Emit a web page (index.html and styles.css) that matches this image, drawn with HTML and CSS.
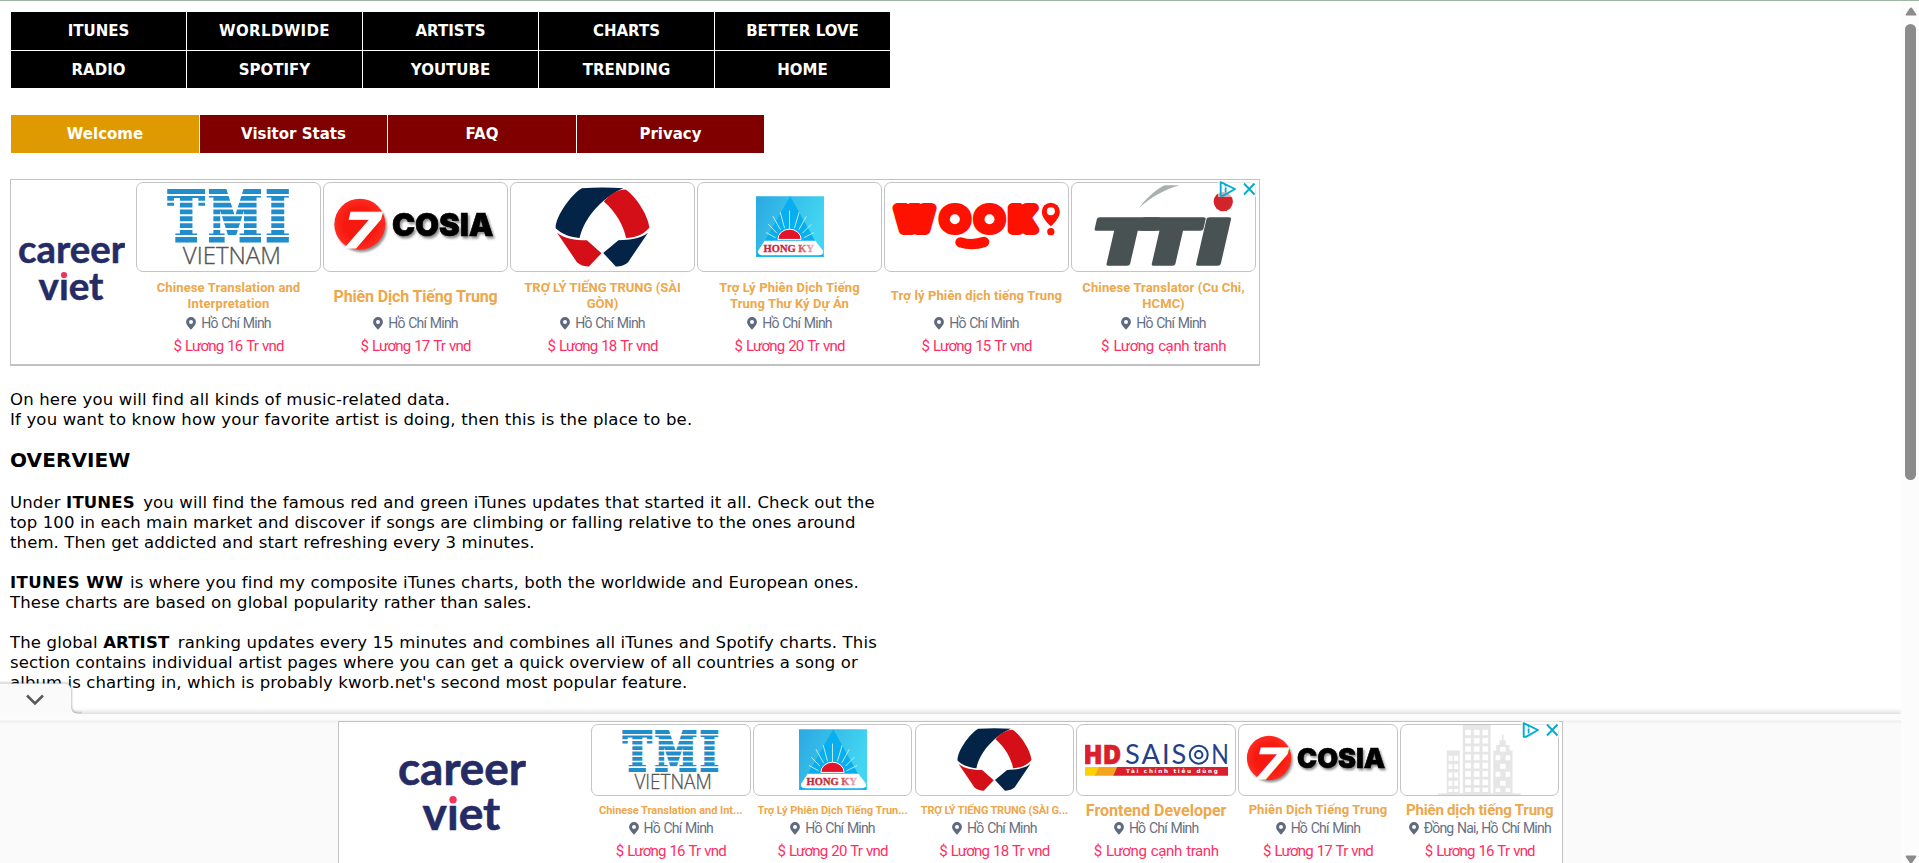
FILE: index.html
```html
<!DOCTYPE html>
<html lang="en">
<head>
<meta charset="utf-8">
<title>Kworb.net</title>
<link rel="stylesheet" href="styles.css">
</head>
<body>
<svg class="defs" aria-hidden="true">
  <defs>
    <linearGradient id="sky" x1="0" x2="1" y1="0" y2="0.4"><stop offset="0" stop-color="#2ba9e2"/><stop offset="1" stop-color="#43d6f2"/></linearGradient>
    <linearGradient id="fade" x1="0" x2="1"><stop offset="0.6" stop-color="#c8283a"/><stop offset="1" stop-color="#efb9c0"/></linearGradient>
    <radialGradient id="ball"><stop offset="0.6" stop-color="#f5190f"/><stop offset="1" stop-color="#ff2a20"/></radialGradient>
    <symbol id="tmi" viewBox="502 60 368 228">
      <g font-family="DejaVu Serif" font-weight="700" font-size="200" fill="#218ecb" stroke="#218ecb" stroke-width="15">
        <text x="506" y="212" textLength="106" lengthAdjust="spacingAndGlyphs">T</text>
        <text x="627" y="212" textLength="158" lengthAdjust="spacingAndGlyphs">M</text>
        <text x="799" y="212" textLength="69" lengthAdjust="spacingAndGlyphs">I</text>
      </g>
      <path d="M500 78h372M500 98.500h372M500 118.500h372M500 139h372M500 159.500h372M500 180h372M500 201h372" stroke="#fff" stroke-width="6"/>
      <text x="549" y="285" font-family="Open Sans" font-weight="300" font-size="74" fill="#555" stroke="#555" textLength="294" lengthAdjust="spacingAndGlyphs">VIETNAM</text>
    </symbol>
    <symbol id="cosia" viewBox="998 84 496 172">
      <g class="drop">
        <circle cx="1078" cy="163" r="77" fill="url(#ball)"/>
        <text x="1175" y="198" font-family="Inter" font-weight="900" font-size="96" textLength="306" lengthAdjust="spacingAndGlyphs" stroke="#000" stroke-width="2">COSIA</text>
      </g>
      <text transform="translate(1019 236) skewX(-14)" font-family="Inter" font-weight="800" font-size="148" fill="#fff" stroke="#fff" stroke-width="3" textLength="106" lengthAdjust="spacingAndGlyphs">7</text>
    </symbol>
    <symbol id="hexa" viewBox="166 50 286 240">
      <path fill="#032347" d="M247 53Q310 49 372 53C318 75 255 135 240 203C215 202 186 192 168 174C166 140 215 70 247 53Z"/>
      <path fill="#d50f18" d="M313 93C330 72 352 58 378 57C408 75 447 135 450 172C430 194 408 202 380 203C372 165 350 125 313 93Z"/>
      <path fill="#d50f18" d="M172 187C195 205 225 209 262 210L306 249L268 289C255 289 240 284 232 276Z"/>
      <path fill="#032347" d="M446 187C424 204 395 208 357 210L311 248L349 289C363 289 378 284 386 276Z"/>
    </symbol>
    <symbol id="hongky" viewBox="769 82 205 182">
      <path fill="url(#sky)" d="M769 82h205v182H769z"/>
      <path fill="#08aef0" d="M872 82L974 264H769Z"/>
      <path d="M870 205V125M855 178L842 130M843 183L820 142M832 193L806 166M828 207L799 191M885 178L899 130M898 183L921 142M909 193L936 166M913 207L944 191" stroke="#b9ecdc" stroke-width="3"/>
      <path fill="#e3142a" stroke="#fff" stroke-width="3" d="M835 212a35 31 0 0 1 70 0z"/>
      <path fill="#fff" d="M795 216H948L971 246Q973 260 958 260H788Q774 260 775 247Z"/>
      <text x="792" y="251" font-family="Liberation Serif" font-weight="700" font-size="32" fill="url(#fade)" stroke="url(#fade)" textLength="152" lengthAdjust="spacingAndGlyphs">HONG KY</text>
    </symbol>
    <symbol id="wook" viewBox="70 94 506 150">
      <g font-family="Inter" font-weight="900" font-size="88" fill="#fe1100" stroke="#fe1100" stroke-width="30" stroke-linejoin="round">
        <text x="85" y="178" textLength="104" lengthAdjust="spacingAndGlyphs">W</text>
        <text x="222" y="177" textLength="74" lengthAdjust="spacingAndGlyphs">O</text>
        <text x="325" y="177" textLength="74" lengthAdjust="spacingAndGlyphs">O</text>
        <text x="428" y="178" textLength="70" lengthAdjust="spacingAndGlyphs">K</text>
      </g>
      <circle cx="258" cy="146" r="15" fill="#fff"/><circle cx="362" cy="146" r="15" fill="#fff"/>
      <path d="M275 215Q310 226 346 214" fill="none" stroke="#fe1100" stroke-width="31" stroke-linecap="round"/>
      <path fill="#fe1100" d="M546 167C532 153 519 139 519 123a27 27 0 0 1 54 0C573 139 560 153 546 167Z"/>
      <circle cx="546" cy="122" r="12" fill="#fff"/><circle cx="546" cy="183" r="11" fill="#fe1100"/>
    </symbol>
    <symbol id="tti" viewBox="660 38 440 250">
      <g font-family="Inter" font-weight="900" font-size="186" fill="#495253" stroke="#495253" stroke-width="11" stroke-linejoin="round">
        <text transform="translate(680 277) skewX(-13)" x="-31" textLength="190" lengthAdjust="spacingAndGlyphs">T</text>
        <text transform="translate(816 277) skewX(-13)" x="-31" textLength="190" lengthAdjust="spacingAndGlyphs">T</text>
        <text transform="translate(973 277) skewX(-13)" textLength="84" lengthAdjust="spacingAndGlyphs">I</text>
      </g>
      <path fill="#a9b0b0" d="M805 109C830 75 860 50 884 39H928C885 51 840 75 805 109Z"/>
      <circle cx="1060" cy="88" r="29" fill="#d3232b"/>
    </symbol>
    <symbol id="saison" viewBox="1005 130 430 96">
      <text x="1000" y="191" font-family="Open Sans" font-weight="800" font-size="80" fill="#dc1f2c" stroke="#dc1f2c" stroke-width="2" textLength="114" lengthAdjust="spacingAndGlyphs">HD</text>
      <g font-family="Lato" font-size="82" fill="#1f4287">
        <text x="1125" y="191" textLength="185" lengthAdjust="spacing">SAIS</text>
        <text x="1385" y="191" textLength="53" lengthAdjust="spacingAndGlyphs">N</text>
      </g>
      <circle cx="1347" cy="162" r="27" fill="none" stroke="#1f4287" stroke-width="6"/><circle cx="1347" cy="162" r="11" fill="none" stroke="#1f4287" stroke-width="6"/>
      <path fill="#fbd107" d="M1005 199h45l-12 26h-33z"/><path fill="#f4a51d" d="M1047 199h57l-12 26h-57z"/><path fill="#dc1f2c" d="M1102 199h333v26H1090z"/>
      <text x="1128" y="218" font-family="DejaVu Sans" font-weight="700" font-size="17" fill="#fff" textLength="276" lengthAdjust="spacing">Tài chính tiêu dùng</text>
    </symbol>
    <symbol id="city" viewBox="777 73 249 211">
      <path fill="#e6e6e6" d="M777 279h26V150h39v129h9V73h84v206h8V150h9V133h10V119h7V102h5V119h7V133h11V150h9V279h25v5H777z"/>
      <g stroke="#fff" stroke-width="17" fill="none">
        <path d="M867 87V275M893 87V275M919 87V275" stroke-dasharray="17 8"/>
        <path d="M814 166V275M831 166V275" stroke-width="12" stroke-dasharray="15 10"/>
        <path d="M972 139V275" stroke-dasharray="15 36"/><path d="M957 164V275M987 164V275" stroke-width="14" stroke-dasharray="15 35"/>
      </g>
    </symbol>
    <symbol id="pin" viewBox="0 0 10 13"><path fill="#5f6a80" fill-rule="evenodd" d="M5 0a4.900 4.900 0 0 1 4.900 4.900C9.900 8 6.500 10.500 5 12.800C3.500 10.500 .1 8 .1 4.900A4.900 4.900 0 0 1 5 0zM5 3a2 2 0 1 0 0 4a2 2 0 0 0 0-4z"/></symbol>
    <symbol id="career" viewBox="0 0 107 59">
      <g font-family="Lato" font-weight="700" font-size="38" fill="#252b64" stroke="#252b64" stroke-width=".5">
        <text x="0" y="20.500" textLength="107" lengthAdjust="spacingAndGlyphs">career</text>
        <text x="20.500" y="58" textLength="65" lengthAdjust="spacingAndGlyphs">viet</text>
      </g>
      <path d="M42 29h8v7.500h-8z" fill="#fff"/><circle cx="46" cy="33" r="3.100" fill="#f0325c"/>
    </symbol>
    <symbol id="choices" viewBox="0 0 38 19">
      <path d="M0 0h38v17H0z" fill="#fff" fill-opacity=".6"/>
      <path d="M2.700 2.200V15.800H5L17 9Z" fill="none" stroke="#00aecd" stroke-width="1.900" stroke-linejoin="round"/>
      <path d="M7.600 7.500v5M7.600 4.800v1.600" stroke="#00aecd" stroke-width="1.800"/>
      <path d="M26 3.500l10.500 11M36.500 3.500l-10.500 11" stroke="#00aecd" stroke-width="1.900"/>
    </symbol>
  </defs>
</svg>

<main class="page">
  <nav class="menu">
    <a>ITUNES</a><a class="wide">WORLDWIDE</a><a>ARTISTS</a><a>CHARTS</a><a>BETTER LOVE</a>
    <a>RADIO</a><a>SPOTIFY</a><a>YOUTUBE</a><a>TRENDING</a><a>HOME</a>
  </nav>
  <nav class="submenu"><a class="active">Welcome</a><a>Visitor Stats</a><a>FAQ</a><a>Privacy</a></nav>

  <section class="ad ad-top">
    <svg class="brand"><use href="#career"/></svg>
    <div class="jobs">
      <article class="job"><div class="logo"><svg class="l-tmi"><use href="#tmi"/></svg></div><h4 class="t-m">Chinese Translation and<br>Interpretation</h4><p class="loc"><svg class="pin"><use href="#pin"/></svg>Hồ Chí Minh</p><p class="pay">$ Lương 16 Tr vnd</p></article>
      <article class="job"><div class="logo"><svg class="l-cosia"><use href="#cosia"/></svg></div><h4 class="t-l">Phiên Dịch Tiếng Trung</h4><p class="loc"><svg class="pin"><use href="#pin"/></svg>Hồ Chí Minh</p><p class="pay">$ Lương 17 Tr vnd</p></article>
      <article class="job"><div class="logo"><svg class="l-hexa"><use href="#hexa"/></svg></div><h4 class="t-m tight">TRỢ LÝ TIẾNG TRUNG (SÀI<br>GÒN)</h4><p class="loc"><svg class="pin"><use href="#pin"/></svg>Hồ Chí Minh</p><p class="pay">$ Lương 18 Tr vnd</p></article>
      <article class="job"><div class="logo"><svg class="l-hongky"><use href="#hongky"/></svg></div><h4 class="t-m">Trợ Lý Phiên Dịch Tiếng<br>Trung Thư Ký Dự Án</h4><p class="loc"><svg class="pin"><use href="#pin"/></svg>Hồ Chí Minh</p><p class="pay">$ Lương 20 Tr vnd</p></article>
      <article class="job"><div class="logo"><svg class="l-wook"><use href="#wook"/></svg></div><h4 class="t-m">Trợ lý Phiên dịch tiếng Trung</h4><p class="loc"><svg class="pin"><use href="#pin"/></svg>Hồ Chí Minh</p><p class="pay">$ Lương 15 Tr vnd</p></article>
      <article class="job"><div class="logo"><svg class="l-tti"><use href="#tti"/></svg></div><h4 class="t-m">Chinese Translator (Cu Chi,<br>HCMC)</h4><p class="loc"><svg class="pin"><use href="#pin"/></svg>Hồ Chí Minh</p><p class="pay loose">$ Lương cạnh tranh</p></article>
    </div>
    <svg class="choices"><use href="#choices"/></svg>
  </section>

  <p class="text intro">On here you will find all kinds of music-related data.<br>If you want to know how your favorite artist is doing, then this is the place to be.</p>
  <h2>OVERVIEW</h2>
  <p class="text"><span class="lead">Under <b>ITUNES</b> you will find the famous red and green iTunes updates that started it all. Check out the</span><br>top 100 in each main market and discover if songs are climbing or falling relative to the ones around<br>them. Then get addicted and start refreshing every 3 minutes.</p>
  <p class="text"><span class="lead"><b class="ww">ITUNES WW</b> is where you find my composite iTunes charts, both the worldwide and European ones.</span><br>These charts are based on global popularity rather than sales.</p>
  <p class="text"><span class="lead">The global <b>ARTIST</b> ranking updates every 15 minutes and combines all iTunes and Spotify charts. This</span><br>section contains individual artist pages where you can get a quick overview of all countries a song or<br>album is charting in, which is probably kworb.net's second most popular feature.</p>
</main>

<div class="anchor">
  <svg class="tab" viewBox="0 0 82 34"><path class="tab-shape" d="M-4 38V2.500H64Q71 2.500 71 9V25Q71 32.500 78 32.500H90V38Z"/><path d="M27 14.500l8 8 8-8" fill="none" stroke="#5a5a5a" stroke-width="2.600"/></svg>
  <section class="ad ad-bottom">
    <svg class="brand"><use href="#career"/></svg>
    <div class="jobs">
      <article class="job"><div class="logo"><svg class="l-tmi"><use href="#tmi"/></svg></div><h4 class="t-s">Chinese Translation and Int...</h4><p class="loc"><svg class="pin"><use href="#pin"/></svg>Hồ Chí Minh</p><p class="pay">$ Lương 16 Tr vnd</p></article>
      <article class="job"><div class="logo"><svg class="l-hongky"><use href="#hongky"/></svg></div><h4 class="t-s">Trợ Lý Phiên Dịch Tiếng Trun...</h4><p class="loc"><svg class="pin"><use href="#pin"/></svg>Hồ Chí Minh</p><p class="pay">$ Lương 20 Tr vnd</p></article>
      <article class="job"><div class="logo"><svg class="l-hexa"><use href="#hexa"/></svg></div><h4 class="t-s tight">TRỢ LÝ TIẾNG TRUNG (SÀI G...</h4><p class="loc"><svg class="pin"><use href="#pin"/></svg>Hồ Chí Minh</p><p class="pay">$ Lương 18 Tr vnd</p></article>
      <article class="job"><div class="logo"><svg class="l-saison"><use href="#saison"/></svg></div><h4 class="t-xl">Frontend Developer</h4><p class="loc"><svg class="pin"><use href="#pin"/></svg>Hồ Chí Minh</p><p class="pay loose">$ Lương cạnh tranh</p></article>
      <article class="job"><div class="logo"><svg class="l-cosia"><use href="#cosia"/></svg></div><h4 class="t-m">Phiên Dịch Tiếng Trung</h4><p class="loc"><svg class="pin"><use href="#pin"/></svg>Hồ Chí Minh</p><p class="pay">$ Lương 17 Tr vnd</p></article>
      <article class="job"><div class="logo"><svg class="l-city"><use href="#city"/></svg></div><h4 class="t-l2">Phiên dịch tiếng Trung</h4><p class="loc"><svg class="pin"><use href="#pin"/></svg>Đồng Nai, Hồ Chí Minh</p><p class="pay">$ Lương 16 Tr vnd</p></article>
    </div>
    <svg class="choices"><use href="#choices"/></svg>
  </section>
</div>

<div class="scrollbar">
  <svg viewBox="0 0 13 10"><path d="M1.500 9.500Q0 9.500 1 7.500L5.300 1.200Q6.500-.3 7.700 1.200L12 7.500Q13 9.500 11.500 9.500Z" fill="#8b8b8b"/></svg>
  <div class="thumb"></div>
  <svg class="down" viewBox="0 0 13 10"><path d="M1.500 .5Q0 .5 1 2.500L5.300 8.800Q6.500 10.300 7.700 8.800L12 2.500Q13 .5 11.500 .5Z" fill="#8b8b8b"/></svg>
</div>
</body>
</html>
```
FILE: styles.css
```css
* { box-sizing: border-box; }
html, body { height: 100%; overflow: hidden; }
body {
  margin: 0;
  background: #fff;
  color: #000;
  font-family: "DejaVu Sans", Verdana, sans-serif;
  border-top: 1px solid #9fb59f;
}
p, h2, h4 { margin: 0; }
svg { display: block; }
.defs { position: absolute; width: 0; height: 0; }

.page { padding: 11px 0 0 10px; }
.menu, .submenu {
  display: grid;
  gap: 1px;
  margin-left: 1px;
  font-size: 15px;
  font-weight: 700;
  color: #fff;
}
.menu { width: 879px; grid-template-columns: repeat(5, 1fr); grid-template-rows: 38px 37px; }
.menu a { display: flex; align-items: center; justify-content: center; background: #000; }
.menu .wide { letter-spacing: .35px; }
.submenu { width: 753px; margin-top: 27px; grid-template-columns: 188px 187px 188px 187px; grid-template-rows: 38px; }
.submenu a { display: flex; align-items: center; justify-content: center; background: #800000; }
.submenu .active { background: #de9a00; }

.ad {
  position: relative;
  display: flex;
  background: #fff;
  border: 1px solid #c2c2c2;
  font-family: Roboto, sans-serif;
  text-align: center;
}
.jobs { display: grid; }
.job { display: flex; flex-direction: column; min-width: 0; white-space: nowrap; }
.logo {
  display: flex;
  align-items: center;
  justify-content: center;
  border: 1px solid #c4c4c4;
  border-radius: 7px;
}
.job h4 { display: flex; align-items: center; justify-content: center; color: #eda74c; font-weight: 700; }
.t-xl { font-size: 16px; }
.t-l { font-size: 16px; letter-spacing: -.15px; }
.t-l2 { font-size: 15px; letter-spacing: -.2px; }
.t-m { font-size: 13px; letter-spacing: .12px; line-height: 16px; }
.t-s { font-size: 11px; letter-spacing: -.04px; }
.tight { letter-spacing: 0; }
.t-s.tight { letter-spacing: -.18px; }
.loc {
  display: flex;
  align-items: center;
  justify-content: center;
  gap: 5px;
  color: #667085;
  font-size: 14px;
  line-height: 20px;
  letter-spacing: -.8px;
  word-spacing: 1px;
}
.pin { width: 10px; height: 13px; }
.pay { color: #ff2d64; font-size: 15px; line-height: 22px; letter-spacing: -.8px; word-spacing: 1px; }
.loose { letter-spacing: -.38px; }
.choices { position: absolute; width: 38px; height: 19px; }
.drop { filter: drop-shadow(5px 7px 4px rgba(0, 0, 0, .45)); }

.ad-top { width: 1250px; height: 187px; margin-top: 26px; border-bottom-width: 2px; }
.ad-top .brand { width: 107px; height: 59px; margin: 62px 11px 0 7px; }
.ad-top .jobs { grid-template-columns: repeat(6, 185px); column-gap: 2px; padding-top: 2px; }
.ad-top .logo { height: 90px; padding-bottom: 1px; }
.ad-top h4 { height: 32px; margin: 8px 0 1px; }
.ad-top .pay { margin-top: 2px; }
.ad-top .choices { top: 0; right: 3px; }
.ad-top .l-tmi { width: 123px; height: 76px; }
.ad-top .l-cosia { width: 165px; height: 57px; }
.ad-top .l-hexa { width: 95px; height: 80px; }
.l-hongky { width: 68px; height: 61px; }
.l-wook { width: 169px; height: 50px; }
.l-tti { width: 147px; height: 83px; }

.text { font-size: 16.5px; line-height: 20px; letter-spacing: .11px; white-space: nowrap; margin-bottom: 20px; }
.lead { letter-spacing: .15px; }
.lead b { margin-right: 3px; }
.lead .ww { letter-spacing: .4px; margin-right: 1px; }
.intro { margin-top: 24px; letter-spacing: .17px; }
h2 { font-size: 20px; line-height: 24px; margin: -2px 0 21px; letter-spacing: .1px; }

.anchor {
  position: fixed;
  left: 0;
  top: 714px;
  width: 1901px;
  height: 149px;
  padding: 7px 0 0 338px;
  background: linear-gradient(#fbfbfb 0 6px, #eeeeee 7px, #fafafa 10px);
  box-shadow: 0 -1px 5px 1px rgba(0, 0, 0, .16);
}
.tab { position: absolute; left: 0; top: -33px; width: 82px; height: 34px; overflow: hidden; }
.tab-shape { fill: #fafafa; filter: drop-shadow(0 0 1.500px rgba(0, 0, 0, .45)); }
.ad-bottom { width: 1225px; height: 160px; }
.ad-bottom .brand { width: 128px; height: 71px; margin: 38px 65px 0 59px; }
.ad-bottom .jobs { grid-template-columns: repeat(6, 159.500px); column-gap: 2.300px; padding-top: 2px; }
.ad-bottom .logo { height: 72px; padding-bottom: 1px; }
.ad-bottom h4 { height: 20px; margin: 4px 0 -2px; }
.ad-bottom .loc { line-height: 21px; }
.ad-bottom .pay { margin-top: 1px; }
.ad-bottom .choices { top: -1px; right: 3px; }
.ad-bottom .l-tmi { width: 97px; height: 60px; }
.ad-bottom .l-cosia { width: 143px; height: 50px; }
.ad-bottom .l-hexa { width: 75px; height: 63px; }
.l-saison { width: 143px; height: 32px; }
.l-city { width: 83px; height: 70px; }

.scrollbar {
  position: fixed;
  top: 1px;
  right: 0;
  width: 18px;
  height: 862px;
  padding: 6px 2px 0 4px;
  background: #fcfcfc;
  overflow: hidden;
}
.scrollbar svg { width: 12px; height: 9px; }
.thumb { width: 11px; height: 456px; margin-top: 8px; background: #8b8b8b; border-radius: 6px; }
.scrollbar .down { margin-top: 375px; }
```
